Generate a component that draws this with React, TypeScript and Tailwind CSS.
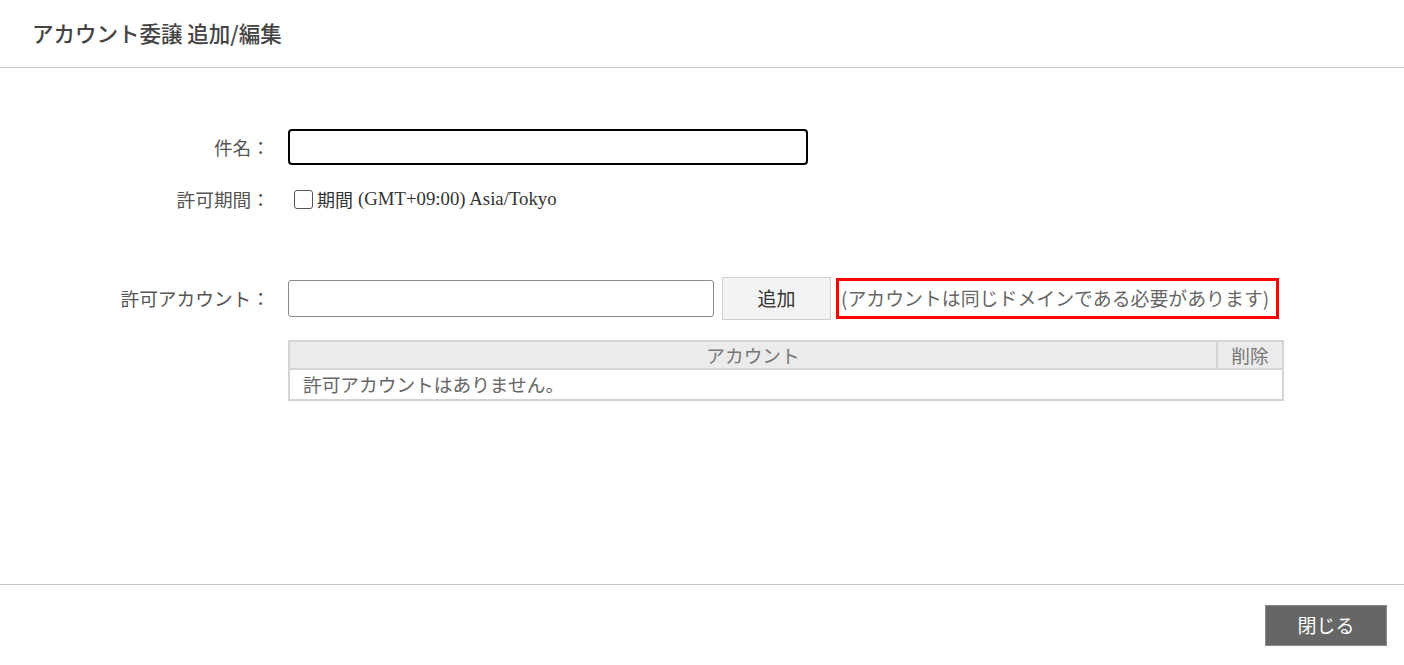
import React from "react";

const jp = { fontFamily: '"Noto Sans CJK JP", "Noto Sans", sans-serif' };

export default function App() {
  return (
    <div className="w-[1404px] h-[665px] bg-white flex flex-col text-[#555]" style={jp}>
      <header className="h-[68px] shrink-0 border-b border-[#c8c8c8] flex items-center pl-[32px]">
        <h1 className="text-[21.5px] font-medium text-[#444]">アカウント委譲 追加/編集</h1>
      </header>
      <main className="flex-1 flex flex-col">
        <div className="flex items-center mt-[61px]">
          <div className="w-[270px] text-right text-[18.7px] leading-none">件名：</div>
          <input
            type="text"
            className="ml-[18px] w-[520px] h-[36px] border-2 border-black rounded-[4px] outline-none px-2"
          />
        </div>
        <div className="flex items-center mt-[22px] h-[24px]">
          <div className="w-[270px] text-right text-[18.7px] leading-none">許可期間：</div>
          <label className="ml-[18px] flex items-center text-[18px] text-[#333]">
            <span className="ml-[6px] w-[19px] h-[19px] border border-[#555] rounded-[3px] bg-white inline-block" />
            <span className="ml-[4px]">期間</span>
            <span className="ml-[5px] text-[18.8px]" style={{ fontFamily: '"Liberation Serif", serif' }}>
              (GMT+09:00) Asia/Tokyo
            </span>
          </label>
        </div>
        <div className="flex items-center mt-[66px] h-[43px]">
          <div className="w-[270px] text-right text-[18.7px] leading-none">許可アカウント：</div>
          <input
            type="text"
            className="ml-[18px] w-[426px] h-[37px] border border-[#8a8a8a] rounded-[3px] outline-none px-2"
          />
          <button className="ml-[8px] w-[109px] h-[43px] bg-[#f3f3f3] border border-[#cfcfcf] text-[19px] text-[#333]">
            追加
          </button>
          <div className="ml-[5px] w-[443px] h-[41px] border-[3px] border-[#ff0000] flex items-center pl-[2px] text-[18.9px] text-[#666] whitespace-nowrap overflow-hidden">
            (アカウントは同じドメインである必要があります)
          </div>
        </div>
        <div className="ml-[288px] mt-[20px] w-[996px] border-2 border-[#d4d4d4] text-[18.7px] text-[#777]">
          <div className="flex h-[28px] bg-[#ebebeb] border-b-2 border-[#d4d4d4]">
            <div className="flex-1 flex items-center justify-center border-r-2 border-[#d4d4d4]">アカウント</div>
            <div className="w-[64px] flex items-center justify-center">削除</div>
          </div>
          <div className="h-[29px] flex items-center pl-[13px] text-[#666]">許可アカウントはありません。</div>
        </div>
      </main>
      <footer className="h-[81px] shrink-0 border-t border-[#c8c8c8] flex justify-end items-start pr-[17px] pt-[20px]">
        <button className="w-[122px] h-[41px] bg-[#666] border border-[#8a8a8a] text-white text-[19px]">閉じる</button>
      </footer>
    </div>
  );
}
